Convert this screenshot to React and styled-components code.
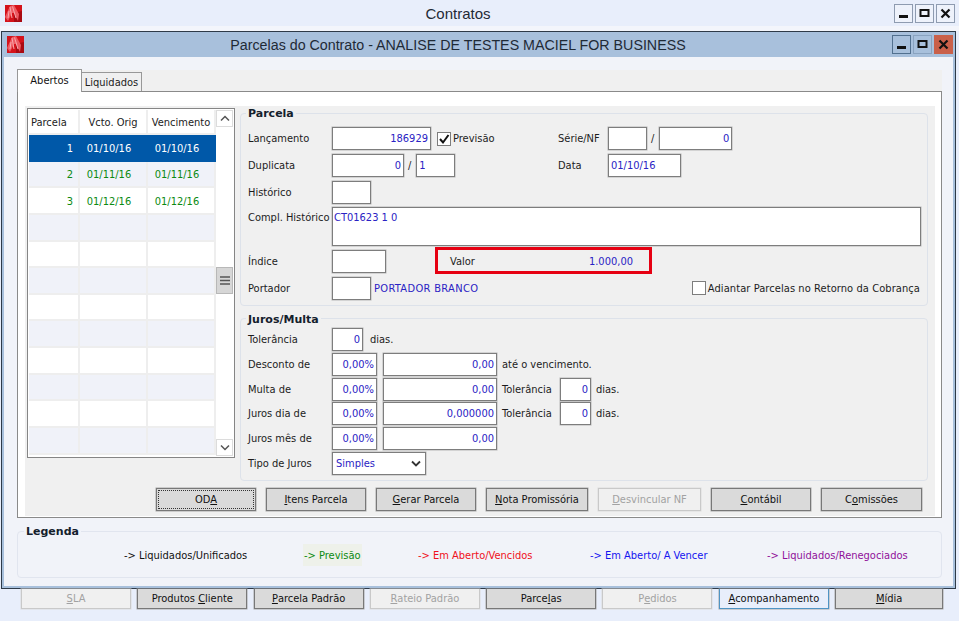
import React from 'react';
import styled, { createGlobalStyle } from 'styled-components';

const GlobalStyle = createGlobalStyle`
  html, body { margin: 0; padding: 0; background: #e8eefb; }
  body { font-family: "DejaVu Sans Condensed", "Liberation Sans", Arial, sans-serif; font-stretch: condensed; font-size: 11px; color: #1c1c1c; }
`;

const Screen = styled.div`
  width: 959px;
  height: 621px;
  overflow: hidden;
  display: flex;
  flex-direction: column;
  background: #e8eefb;
`;

const TopBar = styled.div`
  height: 26px;
  display: flex;
  align-items: center;
  padding: 0 4px 0 5px;
  box-sizing: border-box;
`;

const TopBand = styled.div`
  height: 5px;
  background: #f3f5fb;
`;

const TitleText = styled.div`
  flex: 1;
  text-align: center;
  font-family: "Liberation Sans", Arial, sans-serif;
  font-stretch: normal;
  font-size: ${p => p.$size}px;
  color: #1f2a36;
`;

const WinButtons = styled.div`
  display: flex;
  gap: 2px;
`;

const WinButton = styled.div`
  width: 19px;
  height: 19px;
  box-sizing: border-box;
  display: flex;
  align-items: center;
  justify-content: center;
  background: ${p => p.$close ? '#c9604a' : p.$inner ? '#a8c0dc' : '#eef2fb'};
  border: 1px solid ${p => p.$close ? '#c9604a' : p.$dim ? '#8aa3c0' : p.$inner ? '#52708f' : '#8e9bb0'};
`;

const Window = styled.div`
  margin-left: 1px;
  width: 955px;
  height: 558px;
  box-sizing: border-box;
  border: 1px solid #2e3a48;
  display: flex;
  flex-direction: column;
`;

const WindowBar = styled(TopBar)`
  height: 25px;
  background: #a8c0dc;
  padding: 0 2px 0 5px;
`;

const WindowBody = styled.div`
  flex: 1;
  background: #f1f3f9;
  border: 2px solid #a8c0dc;
  border-top: none;
  padding: 13px 11px 0 13px;
  display: flex;
  flex-direction: column;
`;

const TabStrip = styled.div`
  height: 21px;
  display: flex;
  align-items: flex-end;
  background: #f0f0f0;
`;

const Tab = styled.div`
  box-sizing: border-box;
  display: flex;
  align-items: center;
  justify-content: center;
  border: 1px solid #989898;
  ${p => p.$active
    ? `width: 65px; height: 23px; margin-bottom: -1px; padding-bottom: 2px; background: #fff; border-bottom: none; position: relative; z-index: 1; color: #111;`
    : `width: 60px; height: 19px; background: #f0f0f0; border-left: none; border-bottom: none; color: #222;`}
`;

const TabPanel = styled.div`
  height: 427px;
  box-sizing: border-box;
  background: #fff;
  border: 1px solid #8a8a8a;
  padding: 14px 6px 1px 7px;
  display: flex;
`;

const PanelInner = styled.div`
  flex: 1;
  background: #f0f0f0;
  display: flex;
  flex-direction: column;
  padding-bottom: 5px;
`;

const Upper = styled.div`
  display: flex;
  padding: 0 7px 0 2px;
`;

const GridList = styled.div`
  margin-top: 2px;
  width: 208px;
  height: 350px;
  box-sizing: border-box;
  border: 1px solid #858585;
  background: #fff;
  padding: 1px;
  display: flex;
  flex-shrink: 0;
`;

const GridBody = styled.div`
  flex: 1;
  display: flex;
  flex-direction: column;
`;

const GridRow = styled.div`
  display: grid;
  grid-template-columns: 51px 68px 68px;
  height: ${p => p.$head ? '25px' : '26.65px'};
  color: ${p => p.$selected ? '#fff' : p.$filled ? '#0b8a12' : '#1c1c1c'};
  background: ${p => p.$selected ? '#0058a8' : p.$tint ? '#f0f2f9' : '#fff'};
`;

const GridCell = styled.div`
  box-sizing: border-box;
  display: flex;
  align-items: center;
  justify-content: ${p => p.$justify || 'center'};
  padding: 2px ${p => p.$right || 0}px 0 ${p => p.$left || 0}px;
  border-right: 2px solid ${p => p.$selected ? 'transparent' : '#eeeeee'};
  border-bottom: 2px solid ${p => p.$selected ? 'transparent' : '#eeeeee'};
`;

const ScrollBar = styled.div`
  width: 17px;
  flex-shrink: 0;
  display: flex;
  flex-direction: column;
`;

const ScrollButton = styled.div`
  height: 17px;
  box-sizing: border-box;
  display: flex;
  align-items: center;
  justify-content: center;
  border: 1px solid #dcdcdc;
  ${p => p.$down ? 'margin-top: auto;' : ''}
`;

const ScrollThumb = styled.div`
  margin-top: 140px;
  height: 27px;
  box-sizing: border-box;
  background: #d6d6d6;
  border: 1px solid #b8b8b8;
  display: flex;
  align-items: center;
  justify-content: center;
`;

const Groups = styled.div`
  margin-left: 5px;
  flex: 1;
  display: flex;
  flex-direction: column;
  gap: 6px;
`;

const Group = styled.fieldset`
  margin: 0;
  min-width: 0;
  padding: 0;
  border: 1px solid ${p => p.$light ? '#e1e5ef' : '#dde2ea'};
  border-radius: 4px;
`;

const GroupTitle = styled.legend`
  margin-left: ${p => p.$offset || 5}px;
  padding: 2px 2px 0;
  font-family: "DejaVu Sans", "Liberation Sans", sans-serif;
  font-stretch: normal;
  font-size: 11px;
  line-height: 12px;
  font-weight: bold;
  color: #14202c;
`;

const GroupBody = styled.div`
  padding: ${p => p.$top}px 6px ${p => p.$bottom}px 7px;
  display: flex;
  flex-direction: column;
  gap: ${p => p.$gap}px;
`;

const Row = styled.div`
  display: flex;
  align-items: center;
  height: ${p => p.$h || 23}px;
`;

const Label = styled.div`
  width: ${p => p.$w || 84}px;
  flex-shrink: 0;
  white-space: nowrap;
  align-self: ${p => p.$top ? 'flex-start' : 'auto'};
  padding-top: ${p => p.$top ? 4 : 0}px;
  margin-left: ${p => p.$ml || 0}px;
`;

const Text = styled.div`
  white-space: nowrap;
  margin-left: ${p => p.$ml || 0}px;
  margin-right: ${p => p.$mr || 0}px;
  letter-spacing: ${p => p.$track || 0}px;
  color: ${p => p.$blue ? '#2a22c4' : 'inherit'};
`;

const Field = styled.div`
  width: ${p => p.$w}px;
  height: ${p => p.$h || 23}px;
  margin-left: ${p => p.$ml || 0}px;
  box-sizing: border-box;
  flex-shrink: 0;
  background: #fff;
  border: 1px solid #7d7d7d;
  box-shadow: 0 0 0 0.5px #b5b5b5;
  color: #2a22c4;
  display: flex;
  align-items: ${p => p.$multi ? 'flex-start' : 'center'};
  justify-content: ${p => p.$left ? 'flex-start' : 'flex-end'};
  padding: ${p => p.$multi ? '3px 1px' : '0 2px'};
  white-space: nowrap;
`;

const SelectField = styled(Field)`
  justify-content: space-between;
  padding: 0 4px 0 3px;
`;

const Side = styled.div`
  margin-left: auto;
  width: 363px;
  display: flex;
  align-items: center;
`;

const CheckBox = styled.div`
  width: 14px;
  height: 14px;
  margin-left: ${p => p.$auto ? 'auto' : `${p.$ml || 0}px`};
  box-sizing: border-box;
  background: #fff;
  border: 1px solid #7d7d7d;
  display: flex;
  align-items: center;
  justify-content: center;
  flex-shrink: 0;
`;

const ValorBox = styled.div`
  width: 217px;
  height: 27px;
  margin: -3px 0 0 49px;
  align-self: flex-start;
  box-sizing: border-box;
  border: 3px solid #e60012;
  display: flex;
  align-items: center;
  justify-content: space-between;
  padding: 1px 16px 0 12px;
`;

const ButtonRow = styled.div`
  margin-top: 7px;
  padding-right: 13px;
  display: flex;
  justify-content: flex-end;
  gap: 10px;
`;

const Button = styled.div`
  width: ${p => p.$w || 100}px;
  height: 23px;
  box-sizing: border-box;
  display: flex;
  align-items: center;
  justify-content: center;
  white-space: pre;
  position: relative;
  background: ${p => p.$disabled ? '#f0f0f0' : '#dadada'};
  border: 1px solid ${p => p.$disabled ? '#c9c9c9' : '#787878'};
  box-shadow: 0 0 0 0.5px ${p => p.$disabled ? '#dcdcdc' : '#a8a8a8'};
  color: ${p => p.$disabled ? '#a2a2a2' : '#111'};
  outline: ${p => p.$focus ? '1px dotted #333' : 'none'};
  outline-offset: -3px;
`;

const LegendGroup = styled.div`
  margin-top: 6px;
  height: 53px;
`;

const LegendRow = styled.div`
  padding: 6px 0 11px 106px;
  display: grid;
  grid-template-columns: 179px 115px 172px 177px auto;
  grid-auto-rows: 22px;
`;

const LegendItem = styled.div`
  display: flex;
  align-items: center;
  white-space: nowrap;
  color: ${p => p.$color};
`;

const PrevBadge = styled.span`
  background: #eef1ea;
  height: 22px;
  padding: 0 1px;
  display: flex;
  align-items: center;
`;

const BehindRow = styled.div`
  padding-left: 21px;
  display: flex;
  gap: 6.3px;
`;

const BehindButton = styled(Button)`
  width: ${p => p.$w || 110}px;
  height: 20px;
  background: ${p => p.$disabled ? '#f0f0f0' : p.$focusBlue ? '#e8eefb' : '#dadada'};
  border-color: ${p => p.$disabled ? '#c9c9c9' : p.$focusBlue ? '#4f94c4' : '#787878'};
  border-top: none;
`;

const Ul = styled.span`
  text-decoration: underline;
`;

const AppIcon = () => (
  <svg width="17" height="17" viewBox="0 0 17 17" style={{ flexShrink: 0 }}>
    <rect width="17" height="17" fill="#d4121a" />
    <path d="M9 8 L17 6 L17 17 L9 17 Z" fill="#a90a12" />
    <path d="M0 12 L5 1 L9 0 L14 9 L13 16 L9 8 L7 8 L3 16 Z" fill="#ee5a62" />
    <path d="M5 2 L7 13 M7.5 1.5 L11 13 M4 6 L3 13" stroke="#f9a8ac" strokeWidth="1" fill="none" />
  </svg>
);

const glyphs = [
  <svg width="11" height="11" viewBox="0 0 11 11"><rect x="1" y="7" width="9" height="3" fill="#111" /></svg>,
  <svg width="11" height="11" viewBox="0 0 11 11"><rect x="1.5" y="2" width="8" height="6" fill="none" stroke="#111" strokeWidth="2" /></svg>,
  <svg width="11" height="11" viewBox="0 0 11 11"><path d="M1.5 1.5 L9.5 9.5 M9.5 1.5 L1.5 9.5" stroke="#111" strokeWidth="2.2" /></svg>,
];

const Chevron = ({ up, color = '#555', width = 1.5 }) => (
  <svg width="10" height="7" viewBox="0 0 10 7">
    <path d={up ? 'M1 5.5 L5 1.5 L9 5.5' : 'M1 1.5 L5 5.5 L9 1.5'} fill="none" stroke={color} strokeWidth={width} />
  </svg>
);

const rows = [
  ['1', '01/10/16', '01/10/16'],
  ['2', '01/11/16', '01/11/16'],
  ['3', '01/12/16', '01/12/16'],
  ['', '', ''], ['', '', ''], ['', '', ''], ['', '', ''], ['', '', ''], ['', '', ''], ['', '', ''], ['', '', ''], ['', '', ''],
];

function ContractGrid() {
  return (
    <GridList>
      <GridBody>
        <GridRow $head>
          <GridCell $justify="flex-start" $left={2}>Parcela</GridCell>
          <GridCell>Vcto. Orig</GridCell>
          <GridCell>Vencimento</GridCell>
        </GridRow>
        {rows.map((r, i) => (
          <GridRow key={i} $selected={i === 0} $tint={i % 2 === 1} $filled={!!r[0]}>
            <GridCell $selected={i === 0} $justify="flex-end" $right={5}>{r[0]}</GridCell>
            <GridCell $selected={i === 0} $right={8}>{r[1]}</GridCell>
            <GridCell $selected={i === 0} $right={8}>{r[2]}</GridCell>
          </GridRow>
        ))}
      </GridBody>
      <ScrollBar>
        <ScrollButton><Chevron up /></ScrollButton>
        <ScrollThumb>
          <svg width="10" height="9" viewBox="0 0 10 9">
            <path d="M0 1 H10 M0 4.5 H10 M0 8 H10" stroke="#555" strokeWidth="1.5" />
          </svg>
        </ScrollThumb>
        <ScrollButton $down><Chevron /></ScrollButton>
      </ScrollBar>
    </GridList>
  );
}

function ParcelaGroup() {
  return (
    <Group>
      <GroupTitle>Parcela</GroupTitle>
      <GroupBody $top={7} $bottom={5} $gap={3.8}>
        <Row>
          <Label>Lançamento</Label>
          <Field $w={99}>186929</Field>
          <CheckBox $ml={6}>
            <svg width="12" height="12" viewBox="0 0 12 12">
              <path d="M2 6 L5 9.5 L10.5 2" fill="none" stroke="#111" strokeWidth="2" />
            </svg>
          </CheckBox>
          <Text $ml={2}>Previsão</Text>
          <Side>
            <Label $w={50}>Série/NF</Label>
            <Field $w={39} />
            <Text $ml={4}>/</Text>
            <Field $w={73} $ml={5}>0</Field>
          </Side>
        </Row>
        <Row>
          <Label>Duplicata</Label>
          <Field $w={72}>0</Field>
          <Text $ml={4}>/</Text>
          <Field $w={39} $ml={5} $left>1</Field>
          <Side>
            <Label $w={50}>Data</Label>
            <Field $w={73} $left>01/10/16</Field>
          </Side>
        </Row>
        <Row>
          <Label>Histórico</Label>
          <Field $w={39} />
        </Row>
        <Row $h={39}>
          <Label $top>Compl. Histórico</Label>
          <Field $w={589} $h={39} $left $multi>CT01623 1 0</Field>
        </Row>
        <Row>
          <Label>Índice</Label>
          <Field $w={54} />
          <ValorBox>
            <span>Valor</span>
            <Text $blue>1.000,00</Text>
          </ValorBox>
        </Row>
        <Row>
          <Label>Portador</Label>
          <Field $w={39} />
          <Text $ml={3} $blue $track={0.33}>PORTADOR BRANCO</Text>
          <CheckBox $auto />
          <Text $ml={2} $mr={1} $track={0.08}>Adiantar Parcelas no Retorno da Cobrança</Text>
        </Row>
      </GroupBody>
    </Group>
  );
}

function JurosGroup() {
  return (
    <Group>
      <GroupTitle>Juros/Multa</GroupTitle>
      <GroupBody $top={2} $bottom={5} $gap={1.8}>
        <Row>
          <Label>Tolerância</Label>
          <Field $w={31}>0</Field>
          <Text $ml={7}>dias.</Text>
        </Row>
        <Row>
          <Label>Desconto de</Label>
          <Field $w={45}>0,00%</Field>
          <Field $w={114} $ml={6}>0,00</Field>
          <Text $ml={5}>até o vencimento.</Text>
        </Row>
        <Row>
          <Label>Multa de</Label>
          <Field $w={45}>0,00%</Field>
          <Field $w={114} $ml={6}>0,00</Field>
          <Label $w={58} $ml={5}>Tolerância</Label>
          <Field $w={31}>0</Field>
          <Text $ml={5}>dias.</Text>
        </Row>
        <Row>
          <Label>Juros dia de</Label>
          <Field $w={45}>0,00%</Field>
          <Field $w={114} $ml={6}>0,000000</Field>
          <Label $w={58} $ml={5}>Tolerância</Label>
          <Field $w={31}>0</Field>
          <Text $ml={5}>dias.</Text>
        </Row>
        <Row>
          <Label>Juros mês de</Label>
          <Field $w={45}>0,00%</Field>
          <Field $w={114} $ml={6}>0,00</Field>
        </Row>
        <Row>
          <Label>Tipo de Juros</Label>
          <SelectField $w={94} $left>
            <span>Simples</span>
            <Chevron color="#333" width={1.8} />
          </SelectField>
        </Row>
      </GroupBody>
    </Group>
  );
}

export default function App() {
  return (
    <Screen>
      <GlobalStyle />
      <TopBar>
        <AppIcon />
        <TitleText $size={15}>Contratos</TitleText>
        <WinButtons>
          {glyphs.map((g, i) => <WinButton key={i}>{g}</WinButton>)}
        </WinButtons>
      </TopBar>
      <TopBand />
      <Window>
        <WindowBar>
          <AppIcon />
          <TitleText $size={14.25}>Parcelas do Contrato - ANALISE DE TESTES MACIEL FOR BUSINESS</TitleText>
          <WinButtons>
            {glyphs.map((g, i) => (
              <WinButton key={i} $inner $dim={i === 1} $close={i === 2}>{g}</WinButton>
            ))}
          </WinButtons>
        </WindowBar>
        <WindowBody>
          <TabStrip>
            <Tab $active>Abertos</Tab>
            <Tab>Liquidados</Tab>
          </TabStrip>
          <TabPanel>
            <PanelInner>
              <Upper>
                <ContractGrid />
                <Groups>
                  <ParcelaGroup />
                  <JurosGroup />
                </Groups>
              </Upper>
              <ButtonRow>
                <Button $focus>OD<Ul>A</Ul></Button>
                <Button><Ul>I</Ul>tens Parcela</Button>
                <Button><Ul>G</Ul>erar Parcela</Button>
                <Button $w={102}><Ul>N</Ul>ota Promissória</Button>
                <Button $w={103} $disabled><Ul>D</Ul>esvincular NF</Button>
                <Button><Ul>C</Ul>ontábil</Button>
                <Button $w={101}>C<Ul>o</Ul>missões</Button>
              </ButtonRow>
            </PanelInner>
          </TabPanel>
          <LegendGroup>
            <Group $light>
              <GroupTitle $offset={6}>Legenda</GroupTitle>
              <LegendRow>
                <LegendItem $color="#111">-&gt; Liquidados/Unificados</LegendItem>
                <LegendItem $color="#0b8a12"><PrevBadge>-&gt; Previsão</PrevBadge></LegendItem>
                <LegendItem $color="#f01020">-&gt; Em Aberto/Vencidos</LegendItem>
                <LegendItem $color="#1414f0">-&gt; Em Aberto/ A Vencer</LegendItem>
                <LegendItem $color="#90109a">-&gt; Liquidados/Renegociados</LegendItem>
              </LegendRow>
            </Group>
          </LegendGroup>
        </WindowBody>
      </Window>
      <BehindRow>
        <BehindButton $disabled><Ul>S</Ul>LA</BehindButton>
        <BehindButton>Produtos <Ul>C</Ul>liente</BehindButton>
        <BehindButton><Ul>P</Ul>arcela Padrão</BehindButton>
        <BehindButton $disabled><Ul>R</Ul>ateio Padrão</BehindButton>
        <BehindButton>Parce<Ul>l</Ul>as</BehindButton>
        <BehindButton $disabled>P<Ul>e</Ul>didos</BehindButton>
        <BehindButton $focusBlue><Ul>A</Ul>companhamento</BehindButton>
        <BehindButton $w={108}><Ul>M</Ul>ídia</BehindButton>
      </BehindRow>
    </Screen>
  );
}
